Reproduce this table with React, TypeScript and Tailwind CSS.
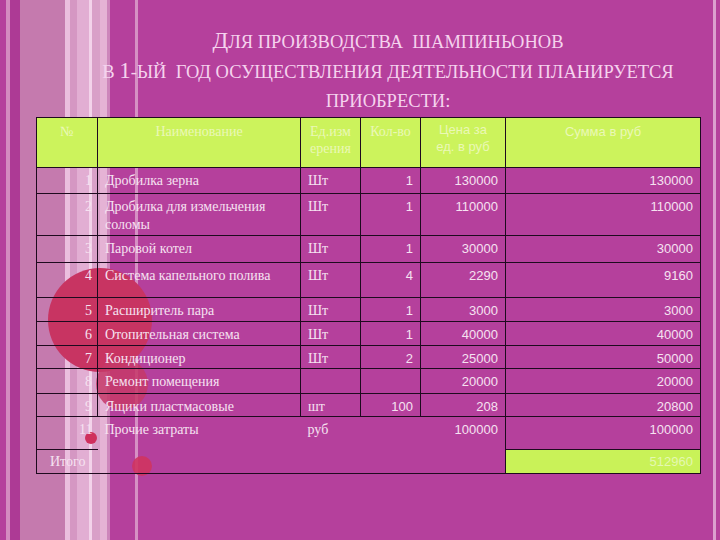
import React from "react";

const serif = "font-['Liberation_Serif',_'Times_New_Roman',_serif]";
const sans = "font-['Liberation_Sans',_Arial,_sans-serif]";

type Row = {
  n: string;
  name: React.ReactNode;
  unit: string;
  qty: string;
  price: string;
  sum: string;
  h: string;
};

const rows: Row[] = [
  { n: "1", name: "Дробилка зерна", unit: "Шт", qty: "1", price: "130000", sum: "130000", h: "h-[26px]" },
  {
    n: "2",
    name: (
      <>
        Дробилка для измельчения
        <br />
        соломы
      </>
    ),
    unit: "Шт",
    qty: "1",
    price: "110000",
    sum: "110000",
    h: "h-[42px]",
  },
  { n: "3", name: "Паровой котел", unit: "Шт", qty: "1", price: "30000", sum: "30000", h: "h-[27px]" },
  { n: "4", name: "Система капельного полива", unit: "Шт", qty: "4", price: "2290", sum: "9160", h: "h-[35px]" },
  { n: "5", name: "Расширитель пара", unit: "Шт", qty: "1", price: "3000", sum: "3000", h: "h-[24px]" },
  { n: "6", name: "Отопительная система", unit: "Шт", qty: "1", price: "40000", sum: "40000", h: "h-[24px]" },
  { n: "7", name: "Кондиционер", unit: "Шт", qty: "2", price: "25000", sum: "50000", h: "h-[23px]" },
  { n: "8", name: "Ремонт помещения", unit: "", qty: "", price: "20000", sum: "20000", h: "h-[25px]" },
  { n: "9", name: "Ящики пластмасовые", unit: "шт", qty: "100", price: "208", sum: "20800", h: "h-[23px]" },
];

function Background() {
  return (
    <svg
      className="absolute inset-0"
      width="720"
      height="540"
      viewBox="0 0 720 540"
      aria-hidden="true"
    >
      <rect x="0" y="0" width="720" height="540" fill="#b5409c" />
      <rect x="6" y="0" width="4" height="540" fill="#d48bc0" />
      <rect x="10" y="0" width="10" height="540" fill="#ad3a95" />
      <rect x="20" y="0" width="45" height="540" fill="#c57aae" />
      <rect x="65" y="0" width="5" height="540" fill="#ebbede" />
      <rect x="70" y="0" width="7" height="540" fill="#d597c3" />
      <rect x="77" y="0" width="12" height="540" fill="#e2aed3" />
      <rect x="89" y="0" width="3" height="540" fill="#f3d3ea" />
      <rect x="92" y="0" width="8" height="540" fill="#d9a0c8" />
      <rect x="100" y="0" width="7" height="540" fill="#e5b3d5" />
      <rect x="107" y="0" width="3" height="540" fill="#cd86bb" />
      <rect x="135" y="0" width="3" height="540" fill="#d690c4" />
      <rect x="713" y="0" width="3" height="540" fill="#dc9fcf" />
      <circle cx="100" cy="320" r="52" fill="#c83462" />
      <circle cx="122" cy="384" r="26" fill="#c53968" opacity="0.85" />
      <circle cx="91" cy="438" r="6" fill="#cf2f5c" />
      <circle cx="142" cy="466" r="10" fill="#cf3460" opacity="0.9" />
    </svg>
  );
}

export default function App() {
  const line = "border-[#1e0a1e]";
  const cell = `border ${line} align-top pt-[4px] leading-[18px]`;
  return (
    <div className="relative w-[720px] h-[540px] overflow-hidden bg-[#b5409c]">
      <Background />
      <div className="relative">
        <div
          className={`${serif} h-[117px] pt-[27px] pl-[56px] text-center text-[#f5d3ee] leading-[28px] uppercase`}
        >
          <div>
            <span className="text-[23px]">Д</span>
            <span className="text-[18.5px]">ля производства&nbsp; шампиньонов</span>
          </div>
          <div>
            <span className="text-[18.5px]">в </span>
            <span className="text-[23px]">1</span>
            <span className="text-[18.5px]">-ый&nbsp; год осуществления деятельности планируется</span>
          </div>
          <div>
            <span className="text-[18.5px]">приобрести:</span>
          </div>
        </div>

        <table className="ml-[36px] w-[664px] table-fixed border-collapse text-[#f6e2f1]">
          <colgroup>
            <col className="w-[61px]" />
            <col className="w-[203px]" />
            <col className="w-[60px]" />
            <col className="w-[60px]" />
            <col className="w-[85px]" />
            <col className="w-[195px]" />
          </colgroup>
          <thead>
            <tr className="h-[50px] bg-[#ccf35c] text-[#eaf8b6]">
              <th className={`border ${line} align-top pt-[5px] leading-[17px] font-normal text-[14px] ${serif}`}>№</th>
              <th className={`border ${line} align-top pt-[5px] leading-[17px] font-normal text-[14px] ${serif}`}>Наименование</th>
              <th className={`border ${line} align-top pt-[5px] leading-[17px] font-normal text-[14px] ${serif}`}>
                Ед.изм
                <br />
                ерения
              </th>
              <th className={`border ${line} align-top pt-[5px] leading-[17px] font-normal text-[14px] ${serif}`}>Кол-во</th>
              <th className={`border ${line} align-top pt-[3px] leading-[17px] font-normal text-[13px] ${sans}`}>
                Цена за
                <br />
                ед. в руб
              </th>
              <th className={`border ${line} align-top pt-[5px] leading-[17px] font-normal text-[13px] ${sans}`}>Сумма в руб</th>
            </tr>
          </thead>
          <tbody>
            {rows.map((r) => (
              <tr key={r.n} className={r.h}>
                <td className={`${cell} ${serif} text-[14px] text-right pr-[5px]`}>{r.n}</td>
                <td className={`${cell} ${serif} text-[14px] pl-[7px]`}>{r.name}</td>
                <td className={`${cell} ${serif} text-[14px] pl-[7px]`}>{r.unit}</td>
                <td className={`${cell} ${sans} text-[13px] text-right pr-[7px]`}>{r.qty}</td>
                <td className={`${cell} ${sans} text-[13px] text-right pr-[7px]`}>{r.price}</td>
                <td className={`${cell} ${sans} text-[13px] text-right pr-[7px]`}>{r.sum}</td>
              </tr>
            ))}
            <tr className="h-[33px]">
              <td className={`border-l border-t border-b ${line} align-top pt-[4px] leading-[18px] ${serif} text-[14px] text-right pr-[5px]`}>
                11
              </td>
              <td className={`border-t ${line} align-top pt-[4px] leading-[18px] ${serif} text-[14px] pl-[7px]`}>
                Прочие затраты
              </td>
              <td className={`border-t ${line} align-top pt-[4px] leading-[18px] ${serif} text-[14px] pl-[7px]`}>руб</td>
              <td className={`border-t ${line}`}></td>
              <td className={`border-t border-r ${line} align-top pt-[4px] leading-[18px] ${sans} text-[13px] text-right pr-[7px]`}>
                100000
              </td>
              <td className={`border-t border-r ${line} align-top pt-[4px] leading-[18px] ${sans} text-[13px] text-right pr-[7px]`}>
                100000
              </td>
            </tr>
            <tr className="h-[24px]">
              <td
                colSpan={5}
                className={`border-l border-b ${line} align-top pt-[3px] leading-[18px] ${serif} text-[14px] pl-[13px]`}
              >
                Итого
              </td>
              <td
                className={`border ${line} bg-[#c9f258] text-[#e4f8b0] align-top pt-[3px] leading-[18px] ${sans} text-[13px] text-right pr-[7px]`}
              >
                512960
              </td>
            </tr>
          </tbody>
        </table>
      </div>
    </div>
  );
}
